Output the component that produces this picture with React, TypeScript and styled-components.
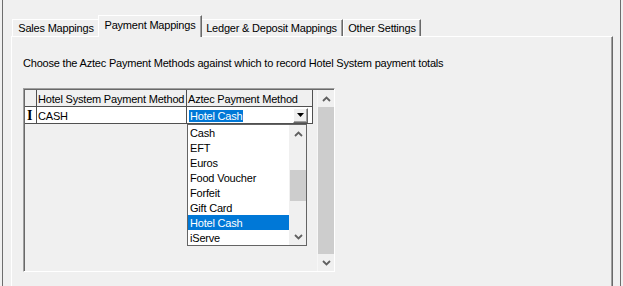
import React from 'react';
import styled, { createGlobalStyle, css } from 'styled-components';

const Global = createGlobalStyle`
  html, body { margin: 0; padding: 0; background: #f0f0f0; }
  body {
    font-family: "Liberation Sans", Arial, sans-serif;
    font-size: 11px;
    letter-spacing: -0.2px;
    color: #000;
  }
  * { box-sizing: border-box; }
`;

const Window = styled.div`
  width: 623px;
  height: 286px;
  overflow: hidden;
  padding-left: 2px;
`;

const Frame = styled.div`
  width: 619px;
  height: 100%;
  border-left: 1px solid #6d6d6d;
  border-right: 1px solid #6d6d6d;
  padding: 15px 7px 0 8px;
  display: flex;
  flex-direction: column;
`;

const TabRow = styled.div`
  display: flex;
  align-items: flex-end;
  height: 21px;
  padding-left: 1px;
`;

const Tab = styled.div<{ $w: number; $active?: boolean }>`
  width: ${(p) => p.$w}px;
  height: 17px;
  border-top: 1px solid #fff;
  border-left: 1px solid #fff;
  border-right: 1px solid #696969;
  box-shadow: inset -1px 0 #a0a0a0;
  background: #f0f0f0;
  text-align: center;
  line-height: 15px;
  padding-top: 1px;
  white-space: nowrap;
  ${(p) =>
    p.$active &&
    css`
      width: ${p.$w + 4}px;
      height: 22px;
      margin: 0 -2px -1px;
      position: relative;
      z-index: 1;
      padding-top: 2px;
    `}
`;

const Panel = styled.div`
  flex: 1;
  border-top: 1px solid #fff;
  border-left: 1px solid #fff;
  border-right: 1px solid #696969;
  box-shadow: inset -1px 0 #a0a0a0;
  padding: 20px 11px 0 11px;
`;

const Instructions = styled.div`
  line-height: 13px;
  white-space: nowrap;
`;

const Grid = styled.div`
  margin-top: 18px;
  width: 312px;
  height: 184px;
  border: 1px solid;
  border-color: #a0a0a0 #fff #fff #a0a0a0;
  box-shadow: inset 1px 1px #696969;
  padding: 1px 0 0 1px;
  display: flex;
  background: #f0f0f0;
`;

const GridBody = styled.div`
  flex: 1;
  display: flex;
  flex-direction: column;
`;

const Row = styled.div`
  display: flex;
  height: 17px;
`;

const Cell = styled.div<{ $w: number; $header?: boolean }>`
  position: relative;
  width: ${(p) => p.$w}px;
  height: 17px;
  border-right: 1px solid #505050;
  border-bottom: 1px solid #505050;
  background: ${(p) => (p.$header ? '#f0f0f0' : '#fff')};
  padding: 2px 0 0 1px;
  line-height: 14px;
  white-space: nowrap;
  overflow: visible;
  display: flex;
  align-items: center;
`;

const RowMarker = styled.span`
  font-family: "Liberation Serif", "Times New Roman", serif;
  font-weight: bold;
  font-size: 14px;
  line-height: 14px;
  margin-left: 1px;
`;

const ComboText = styled.div`
  flex: 1;
  display: flex;
  align-items: center;
  padding-left: 1px;
`;

const Selected = styled.span`
  background: #0078d7;
  color: #fff;
  line-height: 12px;
  padding: 0 1px;
`;

const ComboButton = styled.div`
  width: 15px;
  height: 15px;
  margin-right: 4px;
  margin-top: -2px;
  border-top: 1px solid #fff;
  border-left: 1px solid #fff;
  border-right: 1px solid #696969;
  border-bottom: 1px solid #696969;
  box-shadow: inset -1px -1px #a0a0a0;
  background: #f0f0f0;
  display: flex;
  align-items: center;
  justify-content: center;
`;

const DropList = styled.div`
  position: absolute;
  left: 0;
  top: 17px;
  width: 120px;
  height: 122px;
  border: 1px solid #646464;
  background: #fff;
  display: flex;
  z-index: 5;
`;

const Items = styled.div`
  flex: 1;
`;

const Item = styled.div<{ $sel?: boolean }>`
  height: 15px;
  line-height: 15px;
  padding: 1px 0 0 2px;
  white-space: nowrap;
  background: ${(p) => (p.$sel ? '#0078d7' : 'transparent')};
  color: ${(p) => (p.$sel ? '#fff' : '#000')};
`;

const ScrollBar = styled.div<{ $list?: boolean }>`
  width: 17px;
  display: flex;
  flex-direction: column;
  background: #f0f0f0;
  border-left: 1px solid ${(p) => (p.$list ? '#f0f0f0' : '#f7f7f7')};
`;

const Arrow = styled.div`
  height: 17px;
  display: flex;
  align-items: center;
  justify-content: center;
`;

const Track = styled.div`
  flex: 1;
  display: flex;
  flex-direction: column;
`;

const Thumb = styled.div<{ $top: number; $h?: number }>`
  margin-top: ${(p) => p.$top}px;
  height: ${(p) => (p.$h ? `${p.$h}px` : 'auto')};
  flex: ${(p) => (p.$h ? '0 0 auto' : '1')};
  background: #cdcdcd;
`;

const Chevron = ({ up }: { up?: boolean }) => (
  <svg width="9" height="6" viewBox="0 0 9 6">
    <polyline
      points={up ? '1,5 4.5,1.5 8,5' : '1,1 4.5,4.5 8,1'}
      fill="none"
      stroke="#606060"
      strokeWidth="1.8"
    />
  </svg>
);

const DownTriangle = () => (
  <svg width="7" height="4" viewBox="0 0 7 4">
    <polygon points="0,0 7,0 3.5,4" fill="#000" />
  </svg>
);

const tabs = [
  { label: 'Sales Mappings', w: 88 },
  { label: 'Payment Mappings', w: 100, active: true },
  { label: 'Ledger & Deposit Mappings', w: 143 },
  { label: 'Other Settings', w: 78 },
];

const options = ['Cash', 'EFT', 'Euros', 'Food Voucher', 'Forfeit', 'Gift Card', 'Hotel Cash', 'iServe'];

export default function App() {
  return (
    <>
      <Global />
      <Window>
        <Frame>
          <TabRow>
            {tabs.map((t) => (
              <Tab key={t.label} $w={t.w} $active={t.active}>
                {t.label}
              </Tab>
            ))}
          </TabRow>
          <Panel>
            <Instructions>
              Choose the Aztec Payment Methods against which to record Hotel System payment totals
            </Instructions>
            <Grid>
              <GridBody>
                <Row>
                  <Cell $w={12} $header />
                  <Cell $w={150} $header>Hotel System Payment Method</Cell>
                  <Cell $w={126} $header>Aztec Payment Method</Cell>
                </Row>
                <Row>
                  <Cell $w={12}>
                    <RowMarker>I</RowMarker>
                  </Cell>
                  <Cell $w={150}>CASH</Cell>
                  <Cell $w={126}>
                    <ComboText>
                      <Selected>Hotel Cash</Selected>
                    </ComboText>
                    <ComboButton>
                      <DownTriangle />
                    </ComboButton>
                    <DropList>
                      <Items>
                        {options.map((o) => (
                          <Item key={o} $sel={o === 'Hotel Cash'}>
                            {o}
                          </Item>
                        ))}
                      </Items>
                      <ScrollBar $list>
                        <Arrow>
                          <Chevron up />
                        </Arrow>
                        <Track>
                          <Thumb $top={28} $h={31} />
                        </Track>
                        <Arrow>
                          <Chevron />
                        </Arrow>
                      </ScrollBar>
                    </DropList>
                  </Cell>
                </Row>
              </GridBody>
              <ScrollBar>
                <Arrow>
                  <Chevron up />
                </Arrow>
                <Track>
                  <Thumb $top={0} />
                </Track>
                <Arrow>
                  <Chevron />
                </Arrow>
              </ScrollBar>
            </Grid>
          </Panel>
        </Frame>
      </Window>
    </>
  );
}
